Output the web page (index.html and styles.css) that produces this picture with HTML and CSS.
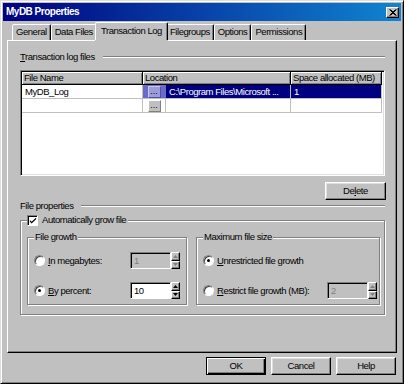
FILE: index.html
```html
<!DOCTYPE html>
<html>
<head>
<meta charset="utf-8">
<title>MyDB Properties</title>
<link rel="stylesheet" href="styles.css">
</head>
<body>
<div class="window">
  <div class="titlebar">
    <span class="title">MyDB Properties</span>
    <span class="close"><svg width="8" height="7" viewBox="0 0 8 7"><path d="M0.5 0.5L6.5 6.5M1.5 0.5L7.5 6.5M6.5 0.5L0.5 6.5M7.5 0.5L1.5 6.5" stroke="#000" stroke-width="1"/></svg></span>
  </div>
  <div class="tabs">
    <div class="tab">General</div>
    <div class="tab">Data Files</div>
    <div class="tab active">Transaction Log</div>
    <div class="tab">Filegroups</div>
    <div class="tab">Options</div>
    <div class="tab">Permissions</div>
  </div>
  <div class="page">
    <div class="section-head"><span><u>T</u>ransaction log files</span><span class="etch"></span></div>
    <div class="grid">
      <div class="grid-head">
        <div class="hcell">File Name</div>
        <div class="hcell">Location</div>
        <div class="hcell">Space allocated (MB)</div>
      </div>
      <div class="grid-row">
        <div class="cell">MyDB_Log</div>
        <div class="cell loc sel"><span class="browse-wrap"><span class="browse">...</span></span><span class="path">C:\Program Files\Microsoft ...</span></div>
        <div class="cell sel">1</div>
      </div>
      <div class="grid-row">
        <div class="cell"></div>
        <div class="cell loc"><span class="browse-wrap"><span class="browse">...</span></span></div>
        <div class="cell"></div>
      </div>
    </div>
    <div class="delete-row"><button class="btn delete">De<u>l</u>ete</button></div>
    <div class="section-head props"><span>File properties</span><span class="etch"></span></div>
    <fieldset class="group outer">
      <legend class="check-legend"><span class="checkbox"><svg width="9" height="9" viewBox="0 0 9 9"><path d="M1 4L3 6L8 1V3L3 8L1 6Z" fill="#000"/></svg></span>Automatically grow file</legend>
      <div class="subgroups">
        <fieldset class="group growth">
          <legend>File growth</legend>
          <div class="opt-row">
            <span class="opt"><span class="radio"></span><span><u>I</u>n megabytes:</span></span>
            <span class="spin disabled"><span class="spin-field">1</span><span class="spin-btns"><span class="sb"><svg width="5" height="3" viewBox="0 0 5 3"><path d="M2.5 0L5 3H0Z" fill="#808080"/></svg></span><span class="sb"><svg width="5" height="3" viewBox="0 0 5 3"><path d="M0 0H5L2.5 3Z" fill="#808080"/></svg></span></span></span>
          </div>
          <div class="opt-row">
            <span class="opt"><span class="radio on"></span><span><u>B</u>y percent:</span></span>
            <span class="spin"><span class="spin-field">10</span><span class="spin-btns"><span class="sb"><svg width="5" height="3" viewBox="0 0 5 3"><path d="M2.5 0L5 3H0Z" fill="#000"/></svg></span><span class="sb"><svg width="5" height="3" viewBox="0 0 5 3"><path d="M0 0H5L2.5 3Z" fill="#000"/></svg></span></span></span>
          </div>
        </fieldset>
        <fieldset class="group maxsize">
          <legend>Maximum file size</legend>
          <div class="opt-row">
            <span class="opt"><span class="radio on"></span><span><u>U</u>nrestricted file growth</span></span>
          </div>
          <div class="opt-row">
            <span class="opt"><span class="radio"></span><span><u>R</u>estrict file growth (MB):</span></span>
            <span class="spin disabled"><span class="spin-field">2</span><span class="spin-btns"><span class="sb"><svg width="5" height="3" viewBox="0 0 5 3"><path d="M2.5 0L5 3H0Z" fill="#808080"/></svg></span><span class="sb"><svg width="5" height="3" viewBox="0 0 5 3"><path d="M0 0H5L2.5 3Z" fill="#808080"/></svg></span></span></span>
          </div>
        </fieldset>
      </div>
    </fieldset>
  </div>
  <div class="footer">
    <button class="btn default">OK</button>
    <button class="btn">Cancel</button>
    <button class="btn">Help</button>
  </div>
</div>
</body>
</html>
```
FILE: styles.css
```css
* { box-sizing: border-box; }
html, body { margin: 0; padding: 0; }
body {
  width: 404px;
  height: 384px;
  overflow: hidden;
  background: #c0c0c0;
  color: #000;
  font-family: "Liberation Sans", Arial, sans-serif;
  font-size: 9.5px;
  letter-spacing: -0.45px;
  line-height: 12px;
}
u { text-decoration: underline; text-underline-offset: 1px; }

.window {
  width: 404px;
  height: 384px;
  background: #c0c0c0;
  border: 1px solid;
  border-color: #dfdfdf #000 #000 #dfdfdf;
  box-shadow: inset 1px 1px #fff, inset -1px -1px #808080;
  padding: 2px;
  display: flex;
  flex-direction: column;
}

.titlebar {
  height: 18px;
  flex: none;
  background: linear-gradient(90deg, #000080, #1084d0);
  display: flex;
  align-items: center;
  justify-content: space-between;
  padding: 0 2px 0 3px;
}
.title { color: #fff; font-weight: bold; font-size: 10px; letter-spacing: -0.5px; }
.close {
  width: 13px;
  height: 11px;
  background: #c0c0c0;
  border: 1px solid;
  border-color: #fff #000 #000 #fff;
  box-shadow: inset -1px -1px #808080;
  display: flex;
  align-items: center;
  justify-content: center;
}

.tabs {
  flex: none;
  height: 18px;
  margin: 1px 4px 0 9px;
  display: flex;
  align-items: flex-end;
  position: relative;
  z-index: 2;
}
.tab {
  height: 16px;
  padding: 0 3px;
  border: 1px solid;
  border-bottom: none;
  border-color: #fff #000 transparent #fff;
  border-radius: 2px 2px 0 0;
  box-shadow: inset -1px 0 #808080;
  line-height: 14px;
  white-space: nowrap;
  background: #c0c0c0;
}
.tab.active {
  height: 18px;
  margin: 0 -2px;
  padding: 0 5px;
  position: relative;
  z-index: 3;
  line-height: 15px;
  box-shadow: inset -1px 0 #808080, 0 1px 0 #c0c0c0;
}

.page {
  flex: 1;
  margin: 0 4px;
  border: 1px solid;
  border-color: #fff #000 #000 #fff;
  box-shadow: inset -1px -1px #808080;
  padding: 10px 11px 0 12px;
  display: flex;
  flex-direction: column;
}

.section-head {
  display: flex;
  align-items: center;
  gap: 8px;
  height: 12px;
}
.etch {
  flex: 1;
  height: 2px;
  border-top: 1px solid #808080;
  border-bottom: 1px solid #fff;
}

.grid {
  margin-top: 7px;
  height: 106px;
  flex: none;
  background: #fff;
  border: 1px solid;
  border-color: #808080 #fff #fff #808080;
  box-shadow: inset 1px 1px #000, inset -1px -1px #dfdfdf;
  padding: 1px 2px 1px 1px;
}
.grid-head, .grid-row {
  display: grid;
  grid-template-columns: 121px 148px 1fr;
}
.hcell {
  height: 13px;
  background: #c0c0c0;
  border-right: 1px solid #000;
  border-bottom: 1px solid #000;
  box-shadow: inset 1px 1px #fff, inset -1px -1px #808080;
  padding-left: 2px;
  line-height: 12px;
  white-space: nowrap;
  overflow: hidden;
}
.cell {
  height: 14px;
  border-right: 1px solid #c0c0c0;
  border-bottom: 1px solid #c0c0c0;
  padding-left: 3px;
  line-height: 13px;
  white-space: nowrap;
  overflow: hidden;
}
.cell.sel { background: #000080; color: #fff; }
.cell.loc { padding-left: 0; display: flex; }
.browse-wrap {
  width: 23px;
  height: 13px;
  flex: none;
  display: flex;
  align-items: flex-start;
  justify-content: center;
  border-right: 1px solid #c0c0c0;
}
.cell.sel .browse-wrap { background: #6a6ac8; border-right-color: #6a6ac8; }
.browse {
  width: 13px;
  height: 12px;
  margin-top: 1px;
  background: #c0c0c0;
  border: 1px solid;
  border-color: #fff #808080 #808080 #fff;
  color: #000;
  font-size: 9px;
  letter-spacing: 0;
  line-height: 9px;
  text-align: center;
}
.cell.sel .browse { background: #9c9cd8; border-color: #c8c8f0 #5050a0 #5050a0 #c8c8f0; }
.path { padding-left: 3px; }

.btn {
  font: inherit;
  letter-spacing: inherit;
  color: #000;
  height: 18px;
  width: 60px;
  padding: 0;
  background: #c0c0c0;
  border: 1px solid;
  border-color: #fff #000 #000 #fff;
  box-shadow: inset -1px -1px #808080, inset 1px 1px #dfdfdf;
  line-height: 14px;
}
.btn.default {
  border-color: #000;
  box-shadow: inset 1px 1px #fff, inset -1px -1px #000, inset -2px -2px #808080;
}
.delete-row {
  display: flex;
  justify-content: flex-end;
  margin-top: 6px;
  margin-right: -1px;
}
.delete { width: 61px; }

.group {
  margin: 0;
  min-width: 0;
  border: 1px solid #808080;
  box-shadow: 1px 1px 0 #fff, inset 1px 1px 0 #fff;
}
.group legend {
  padding: 0 1px;
  background: #c0c0c0;
  line-height: 12px;
  height: 12px;
}
.outer {
  margin-top: 2px;
  padding: 5px 4px 9px 6px;
}
.check-legend {
  display: flex;
  align-items: center;
  gap: 4px;
  padding: 0 2px 0 0 !important;
}
.checkbox {
  width: 11px;
  height: 11px;
  background: #fff;
  border: 1px solid;
  border-color: #808080 #fff #fff #808080;
  box-shadow: inset 1px 1px #000;
  display: flex;
  align-items: center;
  justify-content: center;
  padding: 1px 0 0 1px;
}
.subgroups {
  display: flex;
  gap: 9px;
}
.growth { width: 160px; flex: none; padding: 9px 6px 5px 6px; }
.maxsize { flex: 1; padding: 9px 6px 5px 6px; }
.opt-row {
  height: 17px;
  display: grid;
  align-items: center;
}
.opt-row + .opt-row { margin-top: 13px; }
.growth .opt-row { grid-template-columns: 96px auto; }
.maxsize .opt-row { grid-template-columns: 124px auto; }
.opt { display: flex; align-items: center; gap: 3px; white-space: nowrap; }
.radio {
  width: 11px;
  height: 11px;
  flex: none;
  border-radius: 50%;
  background: #fff;
  border: 1px solid;
  border-color: #808080 #fff #fff #808080;
  box-shadow: inset 1px 1px #404040;
  display: flex;
  align-items: center;
  justify-content: center;
}
.radio.on::after {
  content: "";
  width: 3px;
  height: 3px;
  border-radius: 50%;
  background: #000;
}
.spin { display: flex; height: 17px; }
.spin-field {
  width: 41px;
  height: 17px;
  background: #fff;
  border: 1px solid;
  border-color: #808080 #fff #fff #808080;
  box-shadow: inset 1px 1px #000;
  padding-left: 3px;
  line-height: 15px;
}
.spin.disabled .spin-field { background: #c0c0c0; color: #808080; }
.spin-btns { width: 9px; display: flex; flex-direction: column; }
.sb {
  flex: 1;
  background: #c0c0c0;
  border: 1px solid;
  border-color: #fff #000 #000 #fff;
  box-shadow: inset -1px -1px #808080;
  display: flex;
  align-items: center;
  justify-content: center;
}
.sb svg { display: block; }

.footer {
  flex: none;
  height: 28px;
  display: flex;
  justify-content: flex-end;
  gap: 5px;
  padding: 4px 5px 0 0;
}
```
